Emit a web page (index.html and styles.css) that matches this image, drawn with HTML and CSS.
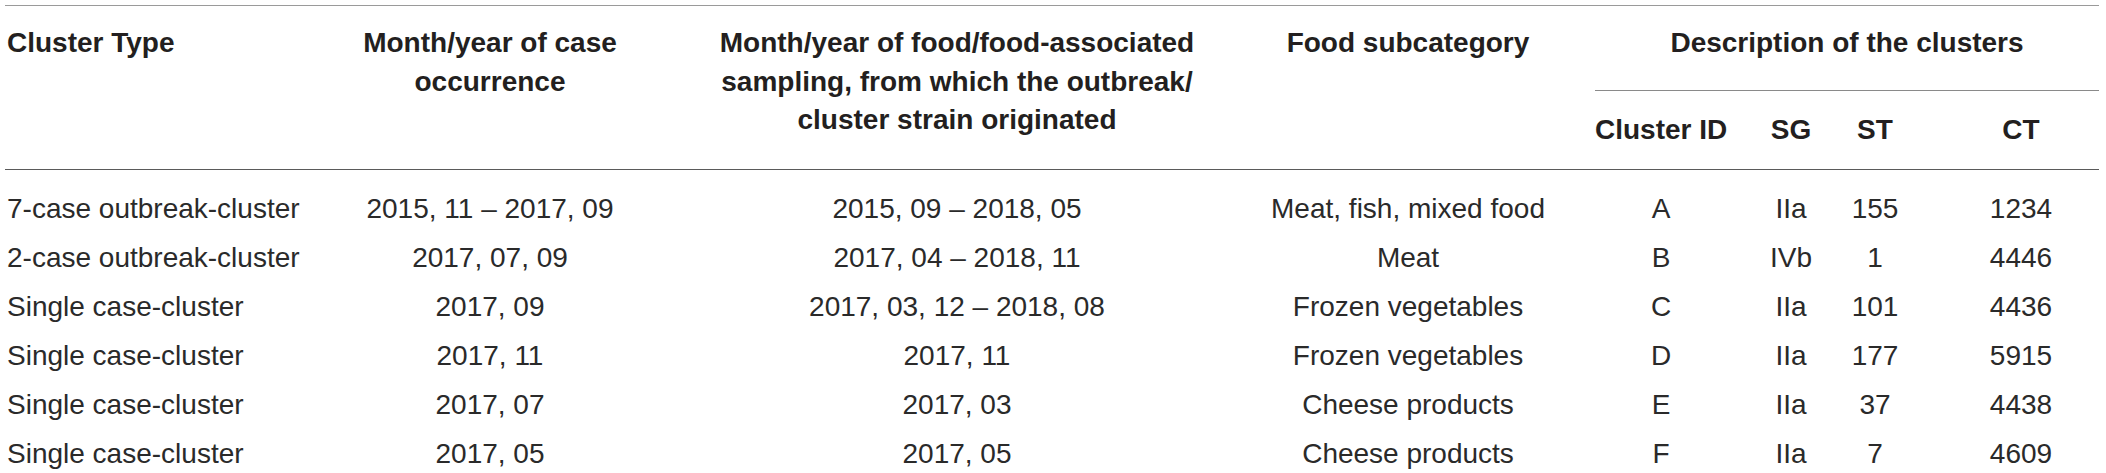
FILE: index.html
```html
<!DOCTYPE html>
<html lang="en">
<head>
<meta charset="utf-8">
<title>Cluster table</title>
<link rel="stylesheet" href="styles.css">
</head>
<body>
<div class="table">
  <div class="thead">
    <div class="th span2 left">Cluster Type</div>
    <div class="th span2">Month/year of case<br>occurrence</div>
    <div class="th span2">Month/year of food/food-associated<br>sampling, from which the outbreak/<br>cluster strain originated</div>
    <div class="th span2">Food subcategory</div>
    <div class="th group">Description of the clusters</div>
    <div class="th sub">Cluster ID</div>
    <div class="th sub sg">SG</div>
    <div class="th sub">ST</div>
    <div class="th sub ct">CT</div>
  </div>
  <div class="tbody">
    <div class="tr"><div class="td left">7-case outbreak-cluster</div><div class="td">2015, 11 – 2017, 09</div><div class="td">2015, 09 – 2018, 05</div><div class="td">Meat, fish, mixed food</div><div class="td">A</div><div class="td sg">IIa</div><div class="td">155</div><div class="td ct">1234</div></div>
    <div class="tr"><div class="td left">2-case outbreak-cluster</div><div class="td">2017, 07, 09</div><div class="td">2017, 04 – 2018, 11</div><div class="td">Meat</div><div class="td">B</div><div class="td sg">IVb</div><div class="td">1</div><div class="td ct">4446</div></div>
    <div class="tr"><div class="td left">Single case-cluster</div><div class="td">2017, 09</div><div class="td">2017, 03, 12 – 2018, 08</div><div class="td">Frozen vegetables</div><div class="td">C</div><div class="td sg">IIa</div><div class="td">101</div><div class="td ct">4436</div></div>
    <div class="tr"><div class="td left">Single case-cluster</div><div class="td">2017, 11</div><div class="td">2017, 11</div><div class="td">Frozen vegetables</div><div class="td">D</div><div class="td sg">IIa</div><div class="td">177</div><div class="td ct">5915</div></div>
    <div class="tr"><div class="td left">Single case-cluster</div><div class="td">2017, 07</div><div class="td">2017, 03</div><div class="td">Cheese products</div><div class="td">E</div><div class="td sg">IIa</div><div class="td">37</div><div class="td ct">4438</div></div>
    <div class="tr"><div class="td left">Single case-cluster</div><div class="td">2017, 05</div><div class="td">2017, 05</div><div class="td">Cheese products</div><div class="td">F</div><div class="td sg">IIa</div><div class="td">7</div><div class="td ct">4609</div></div>
  </div>
</div>
</body>
</html>
```
FILE: styles.css
```css
html, body {
  margin: 0;
  padding: 0;
  background: #ffffff;
}

.table {
  width: 2094px;
  margin: 5px 0 0 5px;
  border-top: 1px solid #9a9a9a;
  font-family: "Liberation Sans", Arial, sans-serif;
  font-size: 28px;
  color: #231f20;
}

.thead,
.tbody {
  display: grid;
  grid-template-columns: 282px 406px 528px 374px 132px 123px 50px 199px;
}

.th {
  font-weight: bold;
  text-align: center;
  line-height: 38.5px;
  white-space: nowrap;
}

.span2 {
  grid-row: span 2;
  padding-top: 18px;
  border-bottom: 1px solid #5a5a5a;
}

.group {
  grid-column: 5 / span 4;
  padding-top: 18px;
  padding-bottom: 27.5px;
  border-bottom: 1px solid #8a8a8a;
}

.sub {
  padding-top: 20px;
  padding-bottom: 19.5px;
  border-bottom: 1px solid #5a5a5a;
}

.tbody {
  padding-top: 14px;
}

.tr {
  display: contents;
}

.td {
  text-align: center;
  line-height: 49px;
  white-space: nowrap;
  color: #2a2a2a;
}

.th.left,
.td.left {
  text-align: left;
  padding-left: 2px;
}

.th.sg,
.td.sg {
  padding-left: 5px;
}

.th.ct,
.td.ct {
  padding-left: 43px;
}
```
